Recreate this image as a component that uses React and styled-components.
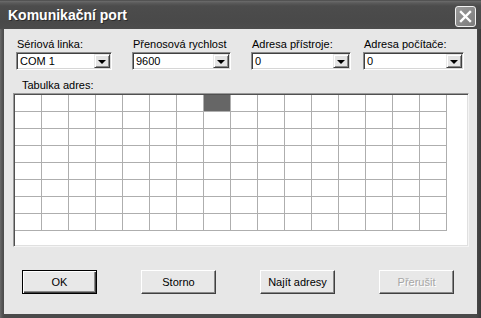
import React from "react";
import styled, { createGlobalStyle } from "styled-components";

const Global = createGlobalStyle`
  html, body { margin: 0; padding: 0; background: #4c4c4c; }
  * { box-sizing: border-box; }
`;

const Window = styled.div`
  width: 481px;
  height: 318px;
  display: flex;
  flex-direction: column;
  background: linear-gradient(90deg, #6a6a6a 0, #555 2px, #4a4a4a 4px, #4a4a4a 476px, #3a3a3a 481px);
  font-family: "Liberation Sans", Arial, sans-serif;
  font-size: 11px;
  color: #000;
`;

const TitleBar = styled.div`
  height: 29px;
  flex: none;
  display: flex;
  align-items: center;
  justify-content: space-between;
  padding: 1px 5px 0 8px;
  background: linear-gradient(#3a3a3a 0, #6c6c6c 1px, #5a5a5a 3px, #4c4c4c 6px, #494949 22px, #4c4c4c 29px);
`;

const Title = styled.div`
  color: #fff;
  font-weight: bold;
  font-size: 14px;
  text-shadow: 1px 1px 0 #2c2c2c;
`;

const CloseButton = styled.div`
  width: 21px;
  height: 21px;
  border: 1px solid #f2f2f2;
  border-radius: 3px;
  background: linear-gradient(135deg, #9a9a9a, #7c7c7c);
  display: flex;
  align-items: center;
  justify-content: center;
  margin-top: 3px;
`;

const Body = styled.div`
  flex: 1;
  margin: 0 4px 4px 4px;
  background: #e7e7e7;
  display: flex;
  flex-direction: column;
  padding-top: 9px;
`;

const FieldRow = styled.div`
  display: grid;
  grid-template-columns: 116px 119px 112px 101px;
  margin-left: 12px;
`;

const Field = styled.div`
  display: flex;
  flex-direction: column;
  gap: 1px;
`;

const Label = styled.div`
  line-height: 13px;
  height: 13px;
  padding-left: 1px;
  white-space: nowrap;
`;

const Combo = styled.div`
  width: ${(p) => p.$w}px;
  height: 18px;
  background: #fff;
  border: 1px solid;
  border-color: #8a8a8a #fff #fff #8a8a8a;
  box-shadow: inset 1px 1px 0 #404040, inset -1px -1px 0 #d6d6d6;
  display: flex;
  align-items: stretch;
  padding: 1px;
`;

const ComboValue = styled.div`
  flex: 1;
  line-height: 14px;
  padding-left: 2px;
`;

const ArrowButton = styled.div`
  width: 16px;
  background: #e4e4e4;
  border: 1px solid;
  border-color: #e8e8e8 #404040 #404040 #e8e8e8;
  box-shadow: inset 1px 1px 0 #fff, inset -1px -1px 0 #8a8a8a;
  display: flex;
  align-items: center;
  justify-content: center;
`;

const Triangle = styled.div`
  width: 0;
  height: 0;
  border-left: 4px solid transparent;
  border-right: 4px solid transparent;
  border-top: 4px solid #000;
  margin-top: 1px;
`;

const TableLabel = styled(Label)`
  margin-top: 9px;
  margin-left: 18px;
  padding-left: 0;
`;

const TableBox = styled.div`
  margin-top: 1px;
  margin-left: 9px;
  width: 456px;
  height: 154px;
  background: #fff;
  border: 1px solid;
  border-color: #9a9a9a #f4f4f4 #f4f4f4 #9a9a9a;
  box-shadow: inset 1px 1px 0 #505050, inset -1px -1px 0 #e0e0e0;
  padding: 1px 0 0 1px;
`;

const Grid = styled.div`
  display: grid;
  grid-template-columns: repeat(16, 27px);
  grid-template-rows: repeat(8, 17px);
`;

const Cell = styled.div`
  border-right: 1px solid #aeaeae;
  border-bottom: 1px solid #aeaeae;
  background: ${(p) => (p.$active ? "#666" : "#fff")};
`;

const ButtonRow = styled.div`
  display: flex;
  gap: 44px;
  margin-top: 23px;
  margin-left: 18px;
`;

const Button = styled.div`
  width: 75px;
  height: 24px;
  display: flex;
  align-items: center;
  justify-content: center;
  background: #e8e8e8;
  border: 1px solid;
  border-color: ${(p) => (p.$default ? "#000" : "#fff #404040 #404040 #fff")};
  box-shadow: ${(p) =>
    p.$default
      ? "inset 1px 1px 0 #fff, inset -1px -1px 0 #404040, inset -2px -2px 0 #8a8a8a"
      : "inset -1px -1px 0 #8a8a8a"};
  color: ${(p) => (p.$disabled ? "#a6a6a6" : "#000")};
  text-shadow: ${(p) => (p.$disabled ? "1px 1px 0 #fff" : "none")};
  font-size: 11px;
`;

const fields = [
  { label: "Sériová linka:", value: "COM 1", w: 96 },
  { label: "Přenosová rychlost", value: "9600", w: 99 },
  { label: "Adresa přístroje:", value: "0", w: 100 },
  { label: "Adresa počítače:", value: "0", w: 101 },
];

const cells = Array.from({ length: 128 }, (_, i) => i);

export default function App() {
  return (
    <>
      <Global />
      <Window>
        <TitleBar>
          <Title>Komunikační port</Title>
          <CloseButton>
            <svg width="13" height="13" viewBox="0 0 13 13">
              <path d="M2 2 L11 11 M11 2 L2 11" stroke="#fff" strokeWidth="2.4" strokeLinecap="square" />
            </svg>
          </CloseButton>
        </TitleBar>
        <Body>
          <FieldRow>
            {fields.map((f) => (
              <Field key={f.label}>
                <Label>{f.label}</Label>
                <Combo $w={f.w}>
                  <ComboValue>{f.value}</ComboValue>
                  <ArrowButton>
                    <Triangle />
                  </ArrowButton>
                </Combo>
              </Field>
            ))}
          </FieldRow>
          <TableLabel>Tabulka adres:</TableLabel>
          <TableBox>
            <Grid>
              {cells.map((i) => (
                <Cell key={i} $active={i === 7} />
              ))}
            </Grid>
          </TableBox>
          <ButtonRow>
            <Button $default>OK</Button>
            <Button>Storno</Button>
            <Button>Najít adresy</Button>
            <Button $disabled>Přerušit</Button>
          </ButtonRow>
        </Body>
      </Window>
    </>
  );
}
